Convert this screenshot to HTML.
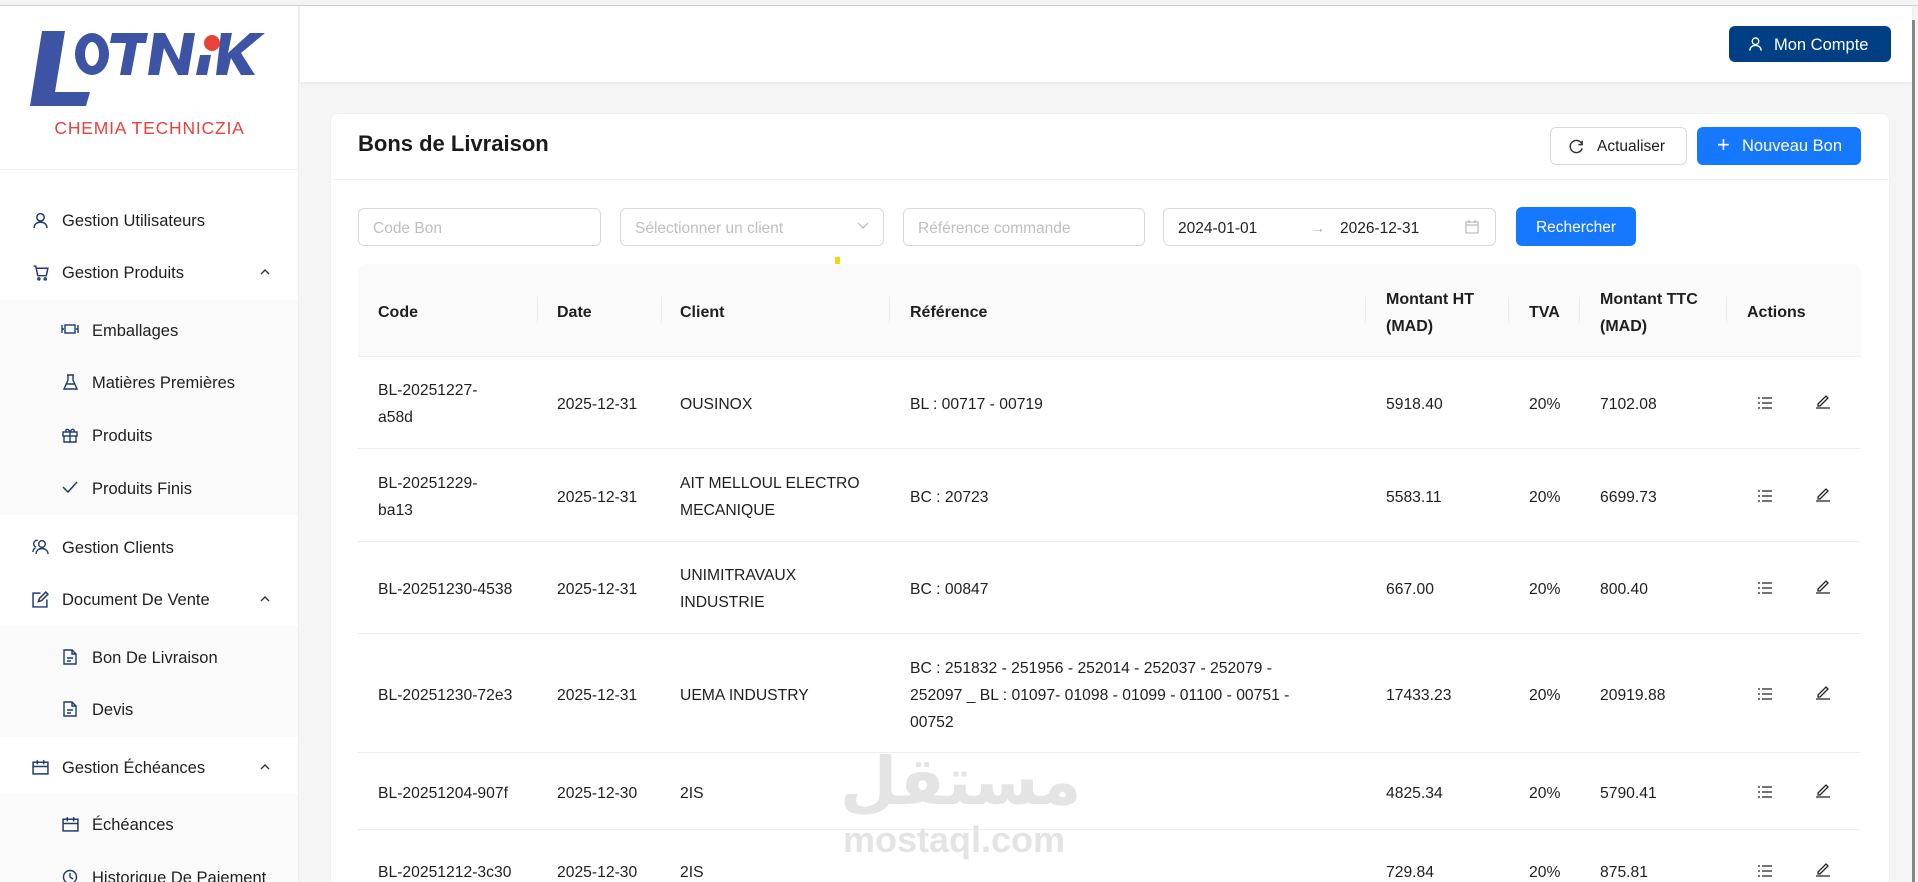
<!DOCTYPE html>
<html style="overflow:hidden"><head><meta charset="utf-8"><style>
*{box-sizing:border-box;margin:0;padding:0}
html,body{width:1918px;height:882px;overflow:hidden}
body{background:#f5f5f5;font-family:"Liberation Sans","Noto Sans CJK SC",sans-serif;color:#1f1f1f;position:relative}
#w{position:relative;width:1918px;height:882px;overflow:hidden}
.a{position:absolute}
.top{left:0;top:0;width:1918px;height:6px;background:#f3f4f6;border-bottom:1px solid #d0d0d0}
.side{left:0;top:6px;width:299px;height:876px;background:#fff;border-right:1px solid #eee}
.mi{position:absolute;left:0;width:298px;font-size:16.5px;color:#1f1f1f;height:20px;line-height:20px;margin-top:2px}
.mi svg{position:absolute;top:1px}
.sub{position:absolute;left:0;width:298px;background:#fafafa}
.hdr{left:300px;top:6px;width:1612px;height:76px;background:#fff;box-shadow:0 1px 3px rgba(0,0,0,.08)}
.card{left:330px;top:113px;width:1560px;height:800px;background:#fff;border-radius:8px;border:1px solid #f0f0f0}
.inp{position:absolute;height:38px;border:1px solid #d9d9d9;border-radius:6px;font-size:15.5px;color:#bfbfbf;padding-left:14px;padding-top:2px;line-height:36px;background:#fff}
.btn{position:absolute;border-radius:6px;font-size:15.5px;line-height:38px;text-align:center}
.th{position:absolute;font-size:16px;font-weight:bold;color:#1f1f1f;line-height:27px;margin-top:2px}
.td{position:absolute;font-size:15.7px;color:#1f1f1f;line-height:27px;margin-top:2px}
.sep{position:absolute;width:1px;height:26px;top:297px;background:#ececec}
.hl{position:absolute;left:358px;width:1503px;height:1px;background:#ededed}
</style></head><body><div id="w">
<div class="a top"></div>
<div class="a side">
 <div class="a" style="left:28px;top:20px;width:240px;height:82px">
  <svg width="240" height="82" viewBox="0 0 240 82">
   <polygon points="14,5 37,5 27,66 62,66 58,80 2,80" fill="#3d54a5"/>
   <ellipse cx="64" cy="28" rx="17" ry="21" fill="#3d54a5"/>
   <ellipse cx="64" cy="28" rx="7" ry="12" fill="#fff"/>
   <polygon points="84,7 120,7 118,17 109,17 103,49 92,49 98,17 82,17" fill="#3d54a5"/>
   <polygon points="126,7 137,7 151,34 156,7 167,7 160,49 150,49 136,22 131,49 120,49" fill="#3d54a5"/>
   <circle cx="184" cy="17" r="8" fill="#e8423a"/>
   <polygon points="172,29 183,29 179,49 168,49" fill="#3d54a5"/>
   <polygon points="193,7 204,7 200,27 222,7 237,7 213,27 227,49 213,49 203,32 199,49 188,49" fill="#3d54a5"/>
  </svg>
 </div>
 <div class="a" style="left:0;top:112px;width:299px;text-align:center;color:#e8423a;font-size:17.5px;letter-spacing:.8px">CHEMIA TECHNICZIA</div>
 <div class="a" style="left:0;top:163px;width:298px;height:1px;background:#f0f0f0"></div>
</div>
<div class="sub" style="top:300px;height:215px"></div>
<div class="sub" style="top:626px;height:111px"></div>
<div class="sub" style="top:794px;height:88px"></div>
<div class="mi" style="top:209px"><svg style="left:32px" width="17" height="17" viewBox="0 0 16 16" fill="none" stroke="#1e3a6e" stroke-width="1.4"><circle cx="8" cy="5" r="3.5"/><path d="M2 15c0-3.5 2.7-5.5 6-5.5s6 2 6 5.5"/></svg><span style="position:absolute;left:62px">Gestion Utilisateurs</span></div>
<div class="mi" style="top:261px"><svg style="left:32px" width="18" height="17" viewBox="0 0 16 16" fill="none" stroke="#1e3a6e" stroke-width="1.4"><path d="M1 2h2l2 9h8l1.5-7H4"/><circle cx="6" cy="14" r="1"/><circle cx="12" cy="14" r="1"/></svg><span style="position:absolute;left:62px">Gestion Produits</span><svg style="left:259px;top:4px" width="12" height="10" viewBox="0 0 12 10" fill="none" stroke="#333" stroke-width="1.4"><path d="M2 7l4-4 4 4"/></svg></div>
<div class="mi" style="top:319px"><svg style="left:61px" width="18" height="14" viewBox="0 0 18 14" fill="none" stroke="#1e3a6e" stroke-width="1.4"><path d="M1 3v8M17 3v8M1 7h2M15 7h2"/><rect x="4" y="3" width="10" height="8"/></svg><span style="position:absolute;left:92px">Emballages</span></div>
<div class="mi" style="top:371px"><svg style="left:63px" width="15" height="16" viewBox="0 0 15 16" fill="none" stroke="#1e3a6e" stroke-width="1.4"><path d="M4 1h7M5 1v5L1 15h13L10 6V1M3 10h9"/></svg><span style="position:absolute;left:92px">Matières Premières</span></div>
<div class="mi" style="top:424px"><svg style="left:62px" width="16" height="16" viewBox="0 0 16 16" fill="none" stroke="#1e3a6e" stroke-width="1.4"><rect x="1" y="5" width="14" height="4"/><path d="M2 9v6h12V9M8 5v10M8 5C6 1 3 2 4 5M8 5c2-4 5-3 4 0"/></svg><span style="position:absolute;left:92px">Produits</span></div>
<div class="mi" style="top:477px"><svg style="left:62px" width="16" height="14" viewBox="0 0 16 14" fill="none" stroke="#1e3a6e" stroke-width="1.5"><path d="M1 7l5 5 9-10"/></svg><span style="position:absolute;left:92px">Produits Finis</span></div>
<div class="mi" style="top:536px"><svg style="left:32px" width="18" height="16" viewBox="0 0 18 16" fill="none" stroke="#1e3a6e" stroke-width="1.4"><circle cx="10" cy="5" r="3.3"/><path d="M4 15c0-3.3 2.7-5.5 6-5.5s6 2.2 6 5.5M6 1.5A3.3 3.3 0 0 0 4 8M1 13c0-2 1-3.5 2.5-4"/></svg><span style="position:absolute;left:62px">Gestion Clients</span></div>
<div class="mi" style="top:588px"><svg style="left:32px" width="17" height="17" viewBox="0 0 16 16" fill="none" stroke="#1e3a6e" stroke-width="1.4"><path d="M8 2H1v13h13V8"/><path d="M6 10l1-3 6-6 2 2-6 6z"/></svg><span style="position:absolute;left:62px">Document De Vente</span><svg style="left:259px;top:4px" width="12" height="10" viewBox="0 0 12 10" fill="none" stroke="#333" stroke-width="1.4"><path d="M2 7l4-4 4 4"/></svg></div>
<div class="mi" style="top:646px"><svg style="left:63px" width="14" height="16" viewBox="0 0 14 16" fill="none" stroke="#1e3a6e" stroke-width="1.4"><path d="M1 1h8l4 4v10H1z M9 1v4h4M4 9h6M4 12h4"/></svg><span style="position:absolute;left:92px">Bon De Livraison</span></div>
<div class="mi" style="top:698px"><svg style="left:63px" width="14" height="16" viewBox="0 0 14 16" fill="none" stroke="#1e3a6e" stroke-width="1.4"><path d="M1 1h8l4 4v10H1z M9 1v4h4M4 9h6M4 12h4"/></svg><span style="position:absolute;left:92px">Devis</span></div>
<div class="mi" style="top:756px"><svg style="left:32px" width="17" height="16" viewBox="0 0 16 15" fill="none" stroke="#1e3a6e" stroke-width="1.4"><rect x="1" y="3" width="14" height="11"/><path d="M1 7h14M5 1v4M11 1v4"/></svg><span style="position:absolute;left:62px">Gestion Échéances</span><svg style="left:259px;top:4px" width="12" height="10" viewBox="0 0 12 10" fill="none" stroke="#333" stroke-width="1.4"><path d="M2 7l4-4 4 4"/></svg></div>
<div class="mi" style="top:813px"><svg style="left:62px" width="17" height="16" viewBox="0 0 16 15" fill="none" stroke="#1e3a6e" stroke-width="1.4"><rect x="1" y="3" width="14" height="11"/><path d="M1 7h14M5 1v4M11 1v4"/></svg><span style="position:absolute;left:92px">Échéances</span></div>
<div class="mi" style="top:866px"><svg style="left:62px" width="16" height="16" viewBox="0 0 16 16" fill="none" stroke="#1e3a6e" stroke-width="1.4"><circle cx="8" cy="8" r="6.5"/><path d="M8 4v4l3 2"/></svg><span style="position:absolute;left:92px">Historique De Paiement</span></div>

<div class="a hdr"></div>
<div class="a" style="left:1912px;top:20px;width:3px;height:862px;background:#888"></div>
<div class="btn" style="left:1729px;top:26px;width:162px;height:36px;background:#003f84;color:#fff;font-size:16.5px;line-height:38px"><svg style="position:absolute;left:19px;top:10px" width="15" height="16" viewBox="0 0 16 16" fill="none" stroke="#fff" stroke-width="1.4"><circle cx="8" cy="5" r="3.5"/><path d="M2 15c0-3.5 2.7-5.5 6-5.5s6 2 6 5.5"/></svg><span style="position:absolute;left:45px">Mon Compte</span></div>

<div class="a card"></div>
<div class="a" style="left:358px;top:131px;font-size:22px;font-weight:bold;color:#1a1a1a">Bons de Livraison</div>
<div class="a" style="left:331px;top:179px;width:1558px;height:1px;background:#f0f0f0"></div>
<div class="btn" style="left:1550px;top:127px;width:137px;height:38px;border:1px solid #d9d9d9;background:#fff;color:#1f1f1f"><svg style="position:absolute;left:18px;top:11px" width="15" height="15" viewBox="0 0 16 16" fill="none" stroke="#333" stroke-width="1.6"><path d="M14 6A6.5 6.5 0 1 0 14 10"/><path d="M14 2v4h-4"/></svg><span style="position:absolute;left:46px;top:0">Actualiser</span></div>
<div class="btn" style="left:1697px;top:127px;width:164px;height:38px;background:#1677ff;color:#fff;font-size:16.5px"><span style="position:absolute;left:20px;top:-1px;font-size:22px">+</span><span style="position:absolute;left:45px">Nouveau Bon</span></div>

<div class="inp" style="left:358px;top:208px;width:243px">Code Bon</div>
<div class="inp" style="left:620px;top:208px;width:264px">Sélectionner un client<svg style="position:absolute;right:14px;top:13px" width="12" height="8" viewBox="0 0 12 8" fill="none" stroke="#bfbfbf" stroke-width="1.3"><path d="M1 1l5 5 5-5"/></svg></div>
<div class="inp" style="left:903px;top:208px;width:242px">Référence commande</div>
<div class="inp" style="left:1163px;top:208px;width:333px;color:#1f1f1f">2024-01-01<span style="position:absolute;left:146px;color:#bbb">→</span><span style="position:absolute;left:176px">2026-12-31</span><svg style="position:absolute;right:16px;top:11px" width="14" height="14" viewBox="0 0 14 14" fill="none" stroke="#bbb" stroke-width="1.2"><rect x="1" y="2" width="12" height="11"/><path d="M1 5h12M4 0v3M10 0v3"/></svg></div>
<div class="btn" style="left:1516px;top:207px;width:120px;height:39px;background:#1677ff;color:#fff;line-height:41px">Rechercher</div>
<div class="a" style="left:835px;top:257px;width:5px;height:18px;background:#f5d800"></div>

<div class="a" style="left:358px;top:264px;width:1503px;height:92px;background:#fafafa;border-radius:8px 8px 0 0"></div>
<div class="sep" style="left:537px"></div><div class="sep" style="left:661px"></div><div class="sep" style="left:889px"></div><div class="sep" style="left:1365px"></div><div class="sep" style="left:1508px"></div><div class="sep" style="left:1579px"></div><div class="sep" style="left:1726px"></div>
<div class="th" style="left:378px;top:297px">Code</div>
<div class="th" style="left:557px;top:297px">Date</div>
<div class="th" style="left:680px;top:297px">Client</div>
<div class="th" style="left:910px;top:297px">Référence</div>
<div class="th" style="left:1386px;top:284px">Montant HT<br>(MAD)</div>
<div class="th" style="left:1529px;top:297px">TVA</div>
<div class="th" style="left:1600px;top:284px">Montant TTC<br>(MAD)</div>
<div class="th" style="left:1747px;top:297px">Actions</div>
<div class="hl" style="top:356px"></div>
<div class="hl" style="top:448px"></div>
<div class="hl" style="top:541px"></div>
<div class="hl" style="top:633px"></div>
<div class="hl" style="top:752px"></div>
<div class="hl" style="top:829px"></div>

<div class="a" style="left:840px;top:742px;font-size:66px;font-weight:bold;color:#e4e4e4;font-family:'DejaVu Sans',sans-serif;line-height:80px">مستقل</div>
<div class="a" style="left:843px;top:820px;font-size:36px;font-weight:bold;color:#e4e4e4;line-height:40px">mostaql.com</div>

<div class="td" style="left:378px;top:375px">BL-20251227-<br>a58d</div><div class="td" style="left:557px;top:389px">2025-12-31</div><div class="td" style="left:680px;top:389px">OUSINOX</div><div class="td" style="left:910px;top:389px">BL : 00717 - 00719</div><div class="td" style="left:1386px;top:389px">5918.40</div><div class="td" style="left:1529px;top:389px">20%</div><div class="td" style="left:1600px;top:389px">7102.08</div>
<div class="td" style="left:378px;top:468px">BL-20251229-<br>ba13</div><div class="td" style="left:557px;top:482px">2025-12-31</div><div class="td" style="left:680px;top:468px">AIT MELLOUL ELECTRO<br>MECANIQUE</div><div class="td" style="left:910px;top:482px">BC : 20723</div><div class="td" style="left:1386px;top:482px">5583.11</div><div class="td" style="left:1529px;top:482px">20%</div><div class="td" style="left:1600px;top:482px">6699.73</div>
<div class="td" style="left:378px;top:574px">BL-20251230-4538</div><div class="td" style="left:557px;top:574px">2025-12-31</div><div class="td" style="left:680px;top:560px">UNIMITRAVAUX<br>INDUSTRIE</div><div class="td" style="left:910px;top:574px">BC : 00847</div><div class="td" style="left:1386px;top:574px">667.00</div><div class="td" style="left:1529px;top:574px">20%</div><div class="td" style="left:1600px;top:574px">800.40</div>
<div class="td" style="left:378px;top:680px">BL-20251230-72e3</div><div class="td" style="left:557px;top:680px">2025-12-31</div><div class="td" style="left:680px;top:680px">UEMA INDUSTRY</div><div class="td" style="left:910px;top:653px">BC : 251832 - 251956 - 252014 - 252037 - 252079 -<br>252097 _ BL : 01097- 01098 - 01099 - 01100 - 00751 -<br>00752</div><div class="td" style="left:1386px;top:680px">17433.23</div><div class="td" style="left:1529px;top:680px">20%</div><div class="td" style="left:1600px;top:680px">20919.88</div>
<div class="td" style="left:378px;top:778px">BL-20251204-907f</div><div class="td" style="left:557px;top:778px">2025-12-30</div><div class="td" style="left:680px;top:778px">2IS</div><div class="td" style="left:1386px;top:778px">4825.34</div><div class="td" style="left:1529px;top:778px">20%</div><div class="td" style="left:1600px;top:778px">5790.41</div>
<div class="td" style="left:378px;top:857px">BL-20251212-3c30</div><div class="td" style="left:557px;top:857px">2025-12-30</div><div class="td" style="left:680px;top:857px">2IS</div><div class="td" style="left:1386px;top:857px">729.84</div><div class="td" style="left:1529px;top:857px">20%</div><div class="td" style="left:1600px;top:857px">875.81</div>

<svg class="a" style="left:0;top:0" width="1918" height="882">
<defs>
<g id="li" fill="none" stroke="#222" stroke-width="1.3"><path d="M0 1h2M0 6h2M0 11h2M4 1h10M4 6h10M4 11h10"/></g>
<g id="ed" fill="none" stroke="#222" stroke-width="1.3"><path d="M2 10l8-8 2 2-8 8H2zM0 14h14"/></g>
</defs>
<use href="#li" x="1758" y="397"/><use href="#ed" x="1816" y="394"/>
<use href="#li" x="1758" y="490"/><use href="#ed" x="1816" y="487"/>
<use href="#li" x="1758" y="582"/><use href="#ed" x="1816" y="579"/>
<use href="#li" x="1758" y="688"/><use href="#ed" x="1816" y="685"/>
<use href="#li" x="1758" y="786"/><use href="#ed" x="1816" y="783"/>
<use href="#li" x="1758" y="865"/><use href="#ed" x="1816" y="862"/>
</svg>
</div></body></html>
